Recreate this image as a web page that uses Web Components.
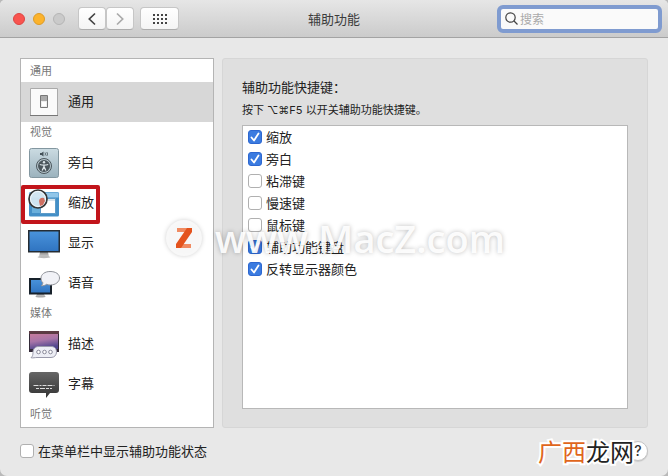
<!DOCTYPE html>
<html lang="zh-CN">
<head>
<meta charset="utf-8">
<title>辅助功能</title>
<style>
html{background:#b9b9b9}
body{margin:0;font:13px/20px Inter,"Noto Sans CJK SC",sans-serif;color:#222}
</style>
</head>
<body>
<mac-window>
  <title-bar slot="bar">辅助功能</title-bar>
  <side-list>
    <side-group label="通用"><side-item icon="switch" selected>通用</side-item></side-group>
    <side-group label="视觉">
      <side-item icon="voice">旁白</side-item>
      <side-item icon="zoom" marked>缩放</side-item>
      <side-item icon="display">显示</side-item>
      <side-item icon="speech">语音</side-item>
    </side-group>
    <side-group label="媒体">
      <side-item icon="describe">描述</side-item>
      <side-item icon="caption">字幕</side-item>
    </side-group>
    <side-group label="听觉"></side-group>
  </side-list>
  <shortcut-panel>
    <span slot="title">辅助功能快捷键：</span>
    <span slot="hint">按下 ⌥⌘F5 以开关辅助功能快捷键。</span>
    <check-box checked>缩放</check-box>
    <check-box checked>旁白</check-box>
    <check-box>粘滞键</check-box>
    <check-box>慢速键</check-box>
    <check-box>鼠标键</check-box>
    <check-box checked>辅助功能键盘</check-box>
    <check-box checked>反转显示器颜色</check-box>
  </shortcut-panel>
  <check-box slot="foot">在菜单栏中显示辅助功能状态</check-box>
  <help-corner slot="foot"></help-corner>
</mac-window>
<water-mark>www.MacZ.com</water-mark>

<script>
const define = (name, html, setup) => {
  const t = document.createElement('template');
  t.innerHTML = html;
  customElements.define(name, class extends HTMLElement {
    constructor() {
      super();
      this.attachShadow({mode: 'open'}).append(t.content.cloneNode(true));
    }
    connectedCallback() { if (setup) setup(this, this.shadowRoot); }
  });
};

define('mac-window', `
<style>
:host{display:flex;flex-direction:column;min-height:100vh;box-sizing:border-box;background:#e8e8e8;border-radius:5px 5px 7px 7px;overflow:hidden}
main{display:flex;gap:8px;padding:20px 20px 0;flex:1}
footer{display:flex;align-items:center;justify-content:space-between;box-sizing:border-box;padding:0 20px 2px;height:48px}
</style>
<slot name="bar"></slot><main><slot></slot></main><footer><slot name="foot"></slot></footer>`);

define('title-bar', `
<style>
:host{display:grid;grid-template-columns:1fr auto 1fr;align-items:center;height:37px;border-bottom:1px solid #a3a3a3;background:linear-gradient(#e6e6e6,#cbcbcb);padding:0 6px;color:#3c3c3c}
.left{display:flex;align-items:center;padding-left:7px}
.lights{display:flex;gap:8px;margin-right:13px}
.lights i{width:12px;height:12px;border-radius:50%;box-sizing:border-box;border:1px solid #dc4543;background:#f9544f}
.lights i:nth-child(2){border-color:#dc9b27;background:#fcb32c}
.lights i:nth-child(3){border-color:#b5b5b5;background:#cacaca}
button{box-sizing:border-box;height:23px;padding:0;border:1px solid #c6c6c6;border-bottom-color:#adadad;border-radius:4px;background:linear-gradient(#fff,#f4f4f4);display:grid;place-items:center}
.nav{width:28px}.grid{width:39px;margin-left:6px}
h1{margin:0;font-size:13px;font-weight:400;line-height:20px}
label{justify-self:end;display:flex;align-items:center;gap:2px;box-sizing:border-box;width:165px;height:28px;border:4px solid #7f9bd0;border-radius:6px;background:#fafafa;padding:0 4px}
input{flex:1;min-width:0;border:0;padding:0;outline:0;background:none;font:12px/18px "Noto Sans CJK SC",sans-serif}
input::placeholder{color:#aaa}
</style>
<div class="left">
  <div class="lights"><i></i><i></i><i></i></div>
  <button class="nav" aria-label="后退"><svg width="10" height="14" fill="none" stroke="#444" stroke-width="1.7"><path d="M8 1.5 2.3 7 8 12.5"/></svg></button>
  <button class="nav" aria-label="前进"><svg width="10" height="14" fill="none" stroke="#aaa" stroke-width="1.7"><path d="M2 1.5 7.7 7 2 12.5"/></svg></button>
  <button class="grid" aria-label="全部显示"><svg width="14" height="10" fill="#444"><path d="M0 0h2v2H0zM4 0h2v2H4zM8 0h2v2H8zM12 0h2v2h-2zM0 4h2v2H0zM4 4h2v2H4zM8 4h2v2H8zM12 4h2v2h-2zM0 8h2v2H0zM4 8h2v2H4zM8 8h2v2H8zM12 8h2v2h-2z"/></svg></button>
</div>
<h1><slot></slot></h1>
<label><svg width="13" height="13" fill="none" stroke="#444" stroke-width="1.2"><circle cx="5.5" cy="5.5" r="4.7"/><path d="m9 9 3.5 3.5"/></svg><input type="text" placeholder="搜索" aria-label="搜索"></label>`);

define('side-list', `
<style>:host{display:block;flex:0 0 194px;box-sizing:border-box;border:1px solid #b4b4b4;background:#fff;padding:2px 0 0}</style>
<slot></slot>`);

define('side-group', `
<style>:host{display:block}h2{margin:0;padding-left:9px;font-size:11px;line-height:21px;font-weight:400;color:#777}</style>
<h2></h2><slot></slot>`, (el, root) => { root.querySelector('h2').textContent = el.getAttribute('label'); });

const monitor = `<linearGradient id="b" x2="0" y2="1"><stop stop-color="#4a94dc"/><stop offset="1" stop-color="#2f73c0"/></linearGradient><linearGradient id="g" x2="0" y2="1"><stop stop-color="#888"/><stop offset="1" stop-color="#d5d5d5"/></linearGradient>`;
const icons = {
  switch: `<path d="M2.500 2.500h27v27h-27z" fill="#fafafa" stroke="#aaa"/><path d="M2 29.500h28" stroke="#777"/><path d="M12.500 9.500h7v12h-7z" fill="#eee" stroke="#777"/><path d="M13 10h6v5h-6z" fill="#aaa"/><path d="M14 16h4v4h-4z" fill="#fff"/>`,
  voice: `<defs><linearGradient id="v" x2="0" y2="1"><stop stop-color="#cbdbe2"/><stop offset="1" stop-color="#9bb2bd"/></linearGradient></defs><rect x="1.500" y="1.500" width="29" height="29" rx="2" fill="url(#v)" stroke="#8397a0"/><path d="M12 6h1.500l2-1.500v5l-2-1.500H12z" fill="#435057"/><path d="M17 5.500q1 1.500 0 3M18.800 5q1.500 2 0 4" fill="none" stroke="#435057" stroke-width=".8"/><circle cx="16" cy="19" r="7.500" fill="#b4c4cb" stroke="#4b565c"/><circle cx="16" cy="19" r="6" fill="#4b565c"/><circle cx="16" cy="15.200" r="1.200" fill="#dce5e9"/><path d="M11.800 17.500q4.200 1.200 8.400 0M16 18v2.300M16 19.500l-1.800 4M16 19.500l1.800 4" fill="none" stroke="#dce5e9" stroke-width="1.300"/>`,
  zoom: `<defs>${monitor}</defs><rect x="1" y="5" width="30" height="24.500" rx="1.500" fill="#438fc7"/><path d="M1.500 5.500h29v5h-29z" fill="#91c6e9"/><path d="M4 13h24v13H4z" fill="#69afdb"/><path d="M12.500 11.500h15v15h-15z" fill="#fff" stroke="#5c9bc8"/><path d="M13 12h14v2H13z" fill="#d7e4ed"/><circle cx="10" cy="12" r="9" fill="#d6e7f1" fill-opacity=".93" stroke="#353535" stroke-width="1.700"/><circle cx="10" cy="12" r="7.500" fill="none" stroke="#fff" stroke-opacity=".7"/><path d="M11 14q1-4 5-3l1 3-2 4-3 1z" fill="#cf6f61"/>`,
  display: `<defs>${monitor}</defs><path d="M12 25h8l1 5h-10z" fill="url(#g)"/><ellipse cx="16" cy="30" rx="6.500" ry="1.200" fill="#bbb"/><path d="M.75 3.750h30.500v21H.75z" fill="url(#b)" stroke="#252c33" stroke-width="1.500"/>`,
  speech: `<defs>${monitor}</defs><path d="M9 27h7l1 2H8z" fill="url(#g)"/><ellipse cx="12.500" cy="29.500" rx="5" ry="1" fill="#aaa"/><path d="M2 12h21v14.500H2z" fill="url(#b)" stroke="#17212b" stroke-width="2"/><path d="M22 4.500c6 0 9.500 2.700 9.500 6.500S27.500 18 22.500 18c-1.500 0-3-.2-4-.7-1.500 1.200-3.500 1.700-5.300 1.400 1-.7 1.700-1.700 1.600-3-1.200-1.200-1.800-2.600-1.800-4.500 0-4 4-6.700 9-6.700z" fill="#f1f2f7" stroke="#8f9299"/>`,
  describe: `<defs><linearGradient id="p" x1="0" x2=".3" y2="1"><stop stop-color="#c77b9c"/><stop offset=".5" stop-color="#a875a8"/><stop offset="1" stop-color="#51478e"/></linearGradient></defs><path d="M1 3h30v21H1z" fill="#332a38"/><path d="M2 6h28v15H2z" fill="url(#p)"/><path d="M1 3h30v3H1z" fill="#5c3b43"/><path d="M11 18.500h12c4 0 5.500 2.500 5.500 5.500s-2 5.500-5.500 5.500H9c-2 0-4 .7-6 .2 1.500-1.200 2-2.700 2-5.200 0-3.500 2-6 6-6z" fill="#edeef5" stroke="#9a9aab"/><g fill="#fff" stroke="#898999"><circle cx="10.500" cy="24" r="1.800"/><circle cx="16.500" cy="24" r="1.800"/><circle cx="22.500" cy="24" r="1.800"/></g>`,
  caption: `<defs><linearGradient id="c" x2="0" y2="1"><stop stop-color="#666"/><stop offset="1" stop-color="#333"/></linearGradient></defs><path d="M4 4h24q3 0 3 3v15q0 3-3 3h-6l-4 5v-5H4q-3 0-3-3V7q0-3 3-3z" fill="url(#c)"/><path d="M5.500 17.500h21" stroke="#ddd" stroke-dasharray="5 1 2 1 4 1"/><path d="M8 20.500h16" stroke="#ddd" stroke-dasharray="3 1 5 1"/>`
};

define('side-item', `
<style>
:host{display:block;position:relative}
button{display:flex;align-items:center;gap:8px;width:100%;height:40px;padding:0 0 0 7px;border:0;background:none;font:inherit;color:inherit;text-align:left}
svg{flex:none}
span{padding-bottom:2px}
:host([selected]) button{background:#d7d7d7}
:host([marked])::after{content:"";position:absolute;left:0;top:2px;width:79px;height:39px;box-sizing:border-box;border:4px solid #c2151b;border-radius:2px}
</style>
<button><svg width="32" height="32" viewBox="0 0 32 32"></svg><span><slot></slot></span></button>`,
(el, root) => { root.querySelector('svg').innerHTML = icons[el.getAttribute('icon')]; });

define('shortcut-panel', `
<style>
:host{display:flex;flex-direction:column;flex:1;min-width:0;box-sizing:border-box;background:#dfdfdf;border:1px solid #d6d6d6;border-radius:3px;padding:18px 19px}
h2,p{margin:0;font-weight:400;line-height:20px}
h2{font-size:13px}
p{font-size:11px;margin:3px 0 5px}
.list{flex:1;box-sizing:border-box;background:#fff;border:1px solid #b8b8b8;padding:0 5px}
</style>
<h2><slot name="title"></slot></h2><p><slot name="hint"></slot></p><div class="list"><slot></slot></div>`);

define('check-box', `
<style>
:host{display:block}
label{display:flex;align-items:center;gap:4px;height:22px}
input{appearance:none;flex:none;width:14px;height:14px;margin:0;box-sizing:border-box;border:1px solid #b0b0b0;border-radius:3px;background:#fff}
.box{display:grid}
.box>*{grid-area:1/1}
svg{display:none;pointer-events:none}
input:checked{border-color:#2d67d0;background:#3b7be0}
input:checked+svg{display:block}
</style>
<label><span class="box"><input type="checkbox"><svg width="14" height="14" fill="none" stroke="#fff" stroke-width="1.800" stroke-linecap="round" stroke-linejoin="round"><path d="m3.500 7.500 2.500 3 4.500-7"/></svg></span><span><slot></slot></span></label>`,
(el, root) => { root.querySelector('input').checked = el.hasAttribute('checked'); });

define('help-corner', `
<style>
:host{display:flex;align-items:center}
.brand{position:relative;z-index:1;margin-right:-6px;font:400 24px/30px "Noto Sans CJK SC",sans-serif;color:#222;paint-order:stroke fill;-webkit-text-stroke:4px #fff}
.brand b{font-weight:400;color:#e0661c}
button{box-sizing:border-box;width:20px;height:20px;padding:0;border:1px solid #c4c4c4;border-radius:50%;background:#fff;font:500 14px/18px Inter,sans-serif;color:#333;box-shadow:0 1px 1px #0002}
</style>
<span class="brand"><b>广西</b>龙网</span><button aria-label="帮助">?</button>`);

define('water-mark', `
<style>
:host{position:absolute;left:165px;top:212px;display:flex;align-items:center;gap:12px;pointer-events:none;font:600 38px/52px "Open Sans",sans-serif;color:#fffe;text-shadow:0 0 5px #0004}
svg{filter:drop-shadow(0 0 2px #0003)}
</style>
<svg width="38" height="38"><circle cx="19" cy="19" r="18" fill="#fafafa" fill-opacity=".93"/><path d="M12 9h15v4H12zM11 25h15v4H11z" fill="#f08b62"/><path d="M22 9h5v4L16 29h-5v-4z" fill="#e4531d"/></svg><span><slot></slot></span>`);
</script>
</body>
</html>
